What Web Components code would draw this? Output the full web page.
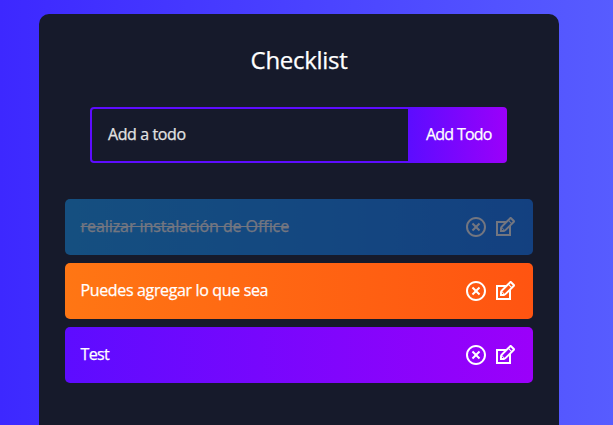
<!DOCTYPE html>
<html lang="es">
<head>
<meta charset="utf-8">
<title>Checklist</title>
<style>
html,body{margin:0;height:100%;overflow:hidden}
body{font-family:"Trebuchet MS","Open Sans","Noto Sans",sans-serif;font-size:16px;color:#fff;-webkit-text-stroke:.25px currentColor;background:linear-gradient(90deg,#3d28ff 0%,#575cff 100%)}
</style>
</head>
<body>
<todo-app>
  <todo-form></todo-form>
  <todo-row tone="blue" done style="--ls:-.07px">realizar instalación de Office</todo-row>
  <todo-row tone="orange" style="--ls:-.35px">Puedes agregar lo que sea</todo-row>
  <todo-row tone="purple" style="--ls:-.65px">Test</todo-row>
</todo-app>
<script>
function define(name, html) {
  const t = document.createElement('template');
  t.innerHTML = html;
  customElements.define(name, class extends HTMLElement {
    constructor() {
      super();
      this.attachShadow({mode: 'open'}).append(t.content.cloneNode(true));
    }
  });
}
define('close-icon', `<style>:host{display:block;width:24px;height:24px}svg{display:block}</style>
<svg width="24" height="24" viewBox="0 0 24 24" fill="currentColor"><path d="M12 22C6.477 22 2 17.523 2 12S6.477 2 12 2s10 4.477 10 10-4.477 10-10 10zm0-2a8 8 0 1 0 0-16 8 8 0 0 0 0 16zm0-9.414l2.828-2.829 1.415 1.415L13.414 12l2.829 2.828-1.415 1.415L12 13.414l-2.828 2.829-1.415-1.415L10.586 12 7.757 9.172l1.415-1.415L12 10.586z" stroke="none"/></svg>`);
define('edit-icon', `<style>:host{display:block;width:24px;height:24px}svg{display:block}</style>
<svg width="24" height="24" viewBox="0 0 24 24" fill="currentColor"><path d="M21.561 5.318l-2.879-2.879c-.293-.293-.677-.439-1.061-.439-.385 0-.768.146-1.061.439l-3.56 3.561h-10v15h15v-10l3.561-3.561c.293-.293.439-.677.439-1.061s-.146-.767-.439-1.06zm-10.061 9.354l-2.172-2.172 6.293-6.293 2.172 2.172-6.293 6.293zm-2.561-1.339l1.756 1.728-1.695-.061-.061-1.667zm7.061 5.667h-11v-11h6l-3.18 3.18c-.293.293-.478.812-.629 1.289-.16.5-.191 1.056-.191 1.47v3.061h3.061c.414 0 1.108-.1 1.571-.29.464-.19.896-.347 1.188-.64l3.18-3.07v6zm2.5-11.328l-2.172-2.172 1.293-1.293 2.171 2.172-1.292 1.293z"/></svg>`);
define('todo-form', `<style>
:host{display:flex;width:417px;height:56px;margin:0 0 36px 51px}
.input{box-sizing:border-box;width:320px;display:flex;align-items:center;padding:0 14px 2px 16px;border:2px solid #5d0cff;border-radius:4px 0 0 4px;color:#e2e2e2;letter-spacing:-.4px}
.button{flex:1;display:flex;align-items:center;padding:0 0 2px 16px;border-radius:0 4px 4px 0;background:linear-gradient(90deg,#5d0cff,#9b00fa);letter-spacing:-.85px;word-spacing:.6px;white-space:nowrap}
</style><div class="input">Add a todo</div><div class="button" role="button">Add Todo</div>`);
define('todo-row', `<style>
:host{box-sizing:border-box;display:flex;align-items:center;width:468px;height:56px;margin:0 auto 8px;padding:0 16px 0 15.5px;border-radius:5px;color:#fff}
:host([tone=purple]){background:linear-gradient(90deg,#5d0cff,#9b00fa)}
:host([tone=orange]){background:linear-gradient(90deg,#ff7614,#ff5411)}
:host([tone=blue]){background:linear-gradient(90deg,#149fff,#117aff)}
:host([done]){opacity:.4}
:host([done]) .text{text-decoration:line-through}
.text{letter-spacing:var(--ls);line-height:22px;margin-bottom:2px;white-space:nowrap}
.icons{display:flex;gap:5px;margin-left:auto}
</style><div class="text"><slot></slot></div><div class="icons"><close-icon></close-icon><edit-icon></edit-icon></div>`);
define('todo-app', `<style>
:host{box-sizing:border-box;display:flow-root;width:520px;height:411px;margin:14px 0 0 39px;padding-top:31px;border-radius:10px 10px 0 0;background:#161a2b}
h1{margin:0 0 33px;font-size:24px;line-height:29px;font-weight:400;text-align:center;letter-spacing:-.3px}
</style><h1>Checklist</h1><slot></slot>`);
</script>
</body>
</html>
